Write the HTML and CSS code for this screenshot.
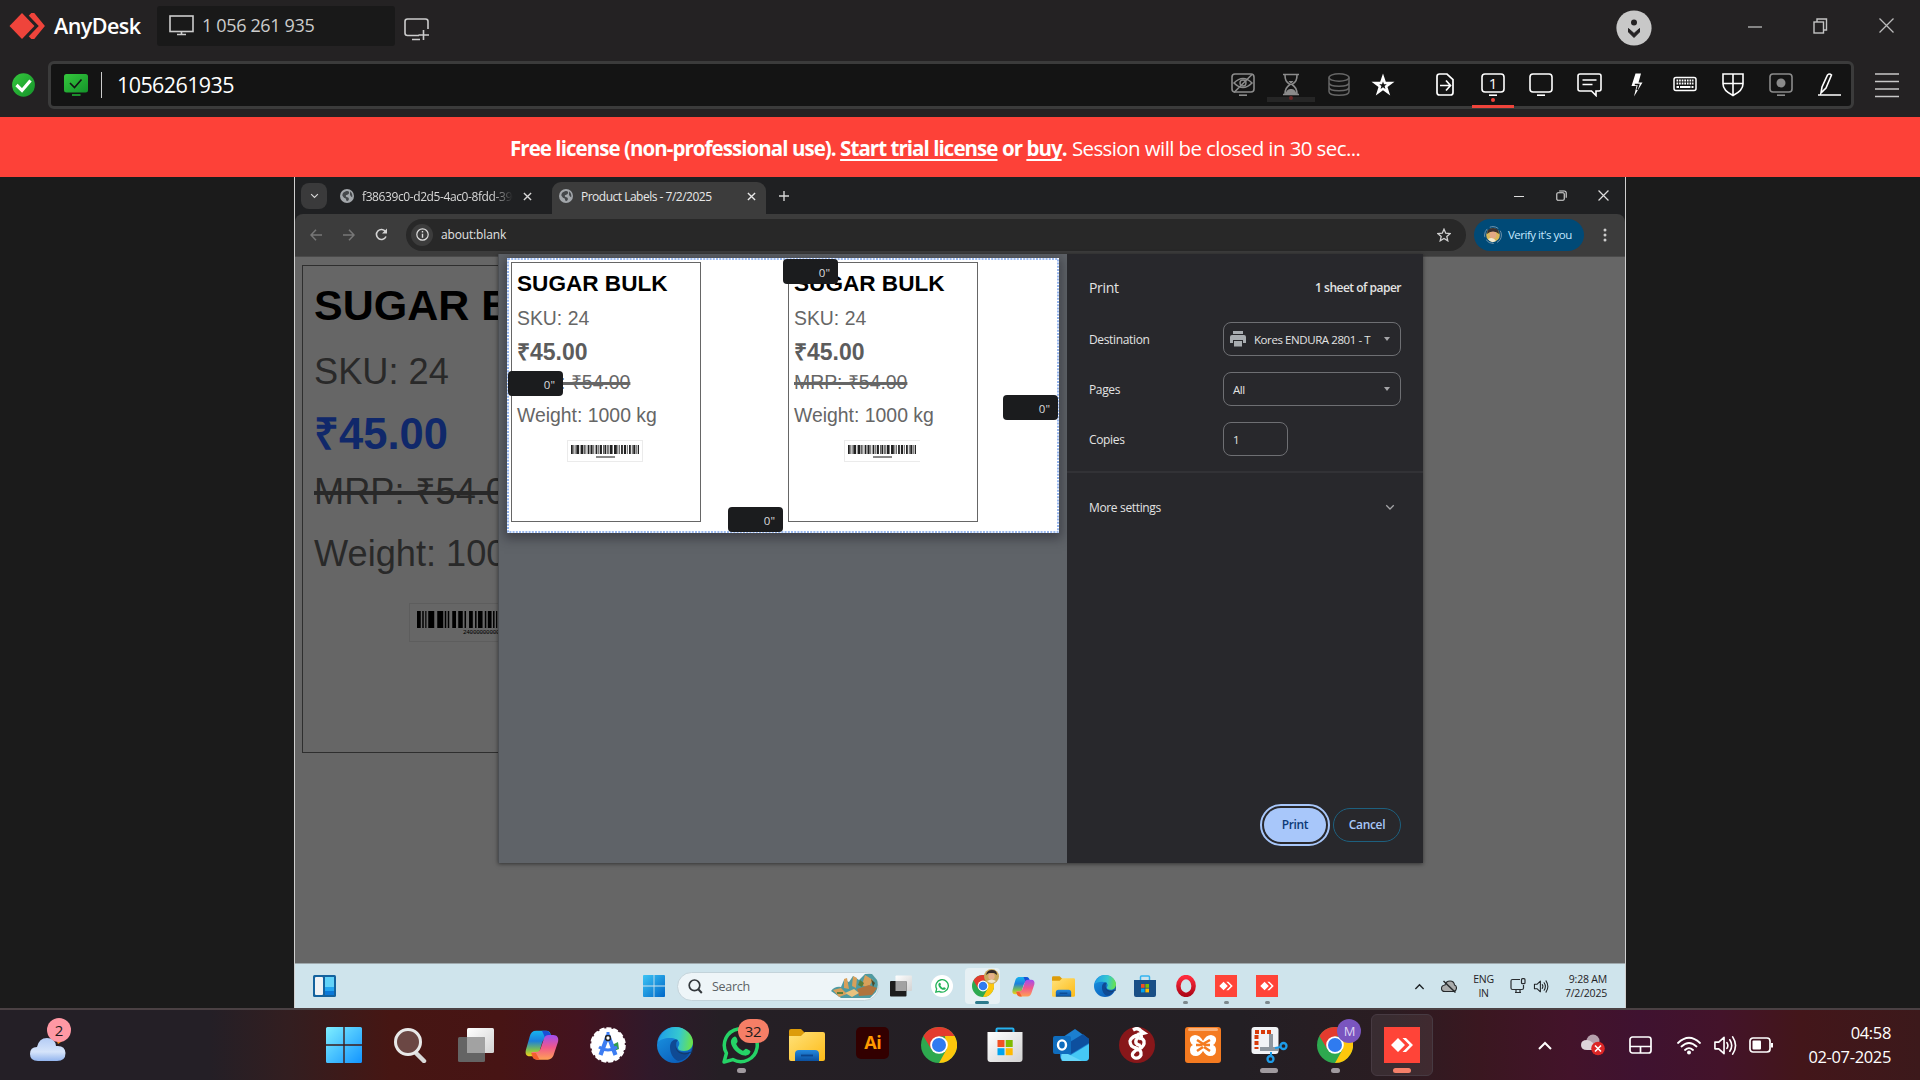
FILE: index.html
```html
<!DOCTYPE html>
<html lang="en">
<head>
<meta charset="utf-8">
<title>AnyDesk</title>
<link rel="stylesheet" href="styles.css">
</head>
<body>
<svg class="defs" width="0" height="0" aria-hidden="true">
  <defs>
    <linearGradient id="gWin" x1="0" y1="0" x2="1" y2="1"><stop offset="0" stop-color="#7fefff"/><stop offset="1" stop-color="#1294ff"/></linearGradient>
    <linearGradient id="gWinDark" x1="0" y1="0" x2="1" y2="1"><stop offset="0" stop-color="#3cc4f5"/><stop offset="1" stop-color="#0067c8"/></linearGradient>
    <linearGradient id="gGreen" x1="0" y1="0" x2="1" y2="1"><stop offset="0" stop-color="#35c83d"/><stop offset="1" stop-color="#14932a"/></linearGradient>
    <linearGradient id="gFolder" x1="0" y1="0" x2="1" y2="1"><stop offset="0" stop-color="#ffe27a"/><stop offset="1" stop-color="#fdbb18"/></linearGradient>
    <linearGradient id="gBlue" x1="0" y1="0" x2="0" y2="1"><stop offset="0" stop-color="#2388dd"/><stop offset="1" stop-color="#0b50a0"/></linearGradient>
    <linearGradient id="gEdgeA" x1="0" y1="0.3" x2="1" y2="0.4"><stop offset="0" stop-color="#1f9de8"/><stop offset=".6" stop-color="#35c8d0"/><stop offset="1" stop-color="#6be34a"/></linearGradient>
    <linearGradient id="gEdgeB" x1="0" y1="0" x2=".7" y2="1"><stop offset="0" stop-color="#1b9ae5"/><stop offset="1" stop-color="#0a5cba"/></linearGradient>
    <linearGradient id="gCopA" x1="0" y1="0" x2="0" y2="1"><stop offset="0" stop-color="#16b4ee"/><stop offset=".4" stop-color="#1c7fdc"/><stop offset=".75" stop-color="#7fc04e"/><stop offset="1" stop-color="#f7cf1a"/></linearGradient>
    <linearGradient id="gCopB" x1="0" y1="0" x2="0" y2="1"><stop offset="0" stop-color="#a04ef0"/><stop offset=".5" stop-color="#f0588c"/><stop offset="1" stop-color="#ffa155"/></linearGradient>
    <linearGradient id="gCloud" x1="0" y1="0" x2="0" y2="1"><stop offset="0" stop-color="#b4ccf5"/><stop offset=".6" stop-color="#d6e4fa"/><stop offset="1" stop-color="#93b5ee"/></linearGradient>
    <linearGradient id="gGrey" x1="0" y1="0" x2="1" y2="1"><stop offset="0" stop-color="#ffffff"/><stop offset="1" stop-color="#d2d2d2"/></linearGradient>
    <linearGradient id="gOpera" x1="0" y1="0" x2="0" y2="1"><stop offset="0" stop-color="#ff2a3c"/><stop offset="1" stop-color="#b00718"/></linearGradient>

    <symbol id="monitor" viewBox="0 0 24 24"><rect x="1" y="1" width="22" height="18" rx="3" fill="none" stroke="currentColor" stroke-width="1.6"/><path d="M8 22.2h8" stroke="currentColor" stroke-width="1.6"/></symbol>
    <symbol id="globe" viewBox="0 0 24 24"><circle cx="12" cy="12" r="12" fill="#a3a7ab"/><path d="M10 4c4-2 7 1 5 4s-5 1-5 4 4 1 5 4-1 4-3 5c-2-1-1-4-3-5s-4-3-5-5c0-3 2-6 6-7zM17 4c3 2 5 6 4 10-2-1-4-3-4-5s1-3 0-5z" fill="#45484b"/></symbol>
    <symbol id="cross" viewBox="0 0 10 10"><path d="M1 1l8 8M9 1L1 9" stroke="currentColor" stroke-width="1.5" fill="none"/></symbol>
    <symbol id="chev" viewBox="0 0 16 10"><path d="M2 1.5l6 6 6-6" stroke="currentColor" stroke-width="2" fill="none"/></symbol>
    <symbol id="restore" viewBox="0 0 14 14"><rect x="1" y="3.5" width="9.5" height="9.5" fill="none" stroke="currentColor" stroke-width="1.4"/><path d="M4 3.5V1h9v9.500h-2.500" fill="none" stroke="currentColor" stroke-width="1.4"/></symbol>
    <symbol id="winlogo" viewBox="0 0 36 36"><path d="M1.500 0H17.300V17.300H0V1.500Q0 0 1.500 0zM18.700 0H34.500Q36 0 36 1.500V17.300H18.700zM0 18.700H17.300V36H1.500Q0 36 0 34.500zM18.700 18.700H36V34.500Q36 36 34.500 36H18.700z"/></symbol>
    <symbol id="edge" viewBox="0 0 36 36"><circle cx="18" cy="18" r="18" fill="url(#gEdgeB)"/><path d="M1 15C4 5 11 0 18 0c11 0 18 8 18 15 0 6-4 9-9 9-4 0-6-1-6-3s2-3 1-6c-1-2-4-4-9-4-6 0-10 2-12 4z" fill="url(#gEdgeA)"/><path d="M13 20c0-6 5-9 8-7-3 3-3 8 0 11s8 3 12 1c-2 5-7 9-12 9-5-2-8-8-8-14z" fill="#0f4a94"/><path d="M21 13c-3 3-2 9 1 11 4 2 9 2 12 .5L36 18V26l-3.500 0C28 29 21 27 19 22c-1-3 0-7 2-9z" fill="#16294a" opacity=".55"/></symbol>
    <symbol id="chrome" viewBox="0 0 36 36"><circle cx="18" cy="18" r="18" fill="#2da94f"/><path d="M2.400 9A18 18 0 0 1 33.600 9L18 9.500 10.500 22.500z" fill="#e33b2e"/><path d="M33.600 9A18 18 0 0 1 18 36L25.500 22.500 24 9z" fill="#fdc70c"/><circle cx="18" cy="18" r="8.800" fill="#fff"/><circle cx="18" cy="18" r="7" fill="#2f7bf0"/></symbol>
    <symbol id="copilot" viewBox="0 0 36 36"><path d="M23 3c2 0 3 1 4 3l1 5h-5c-3 0-4 2-5 5l-3 10c-1 4-3 4-6 4H5c-4 0-5-3-4-7L5 9c1-4 3-6 7-6z" fill="url(#gCopA)"/><path d="M22 3c2 0 4 1 5 4l1.500 5H22l-4-9z" fill="#1a4fd6"/><path d="M13 33c-3 0-4-1-5-4l-1-4h5c3 0 4-2 5-5l3-9c1-3 3-4 5-4h5c4 0 6 3 5 7l-4 12c-1 4-3 7-7 7z" transform="translate(0 .5)" fill="url(#gCopB)"/><path d="M13 12h6l-5 14H8z" fill="#fff" opacity="0"/><path d="M12.500 33.500c-3 0-4-1-5-4l-1-3h5l4 7z" fill="#f4602e"/></symbol>
    <symbol id="folder" viewBox="0 0 36 36"><path d="M0 4q0-2 2-2h10l4 4v6H0z" fill="#dd9c0a"/><path d="M0 9h12l4-4h18q2 0 2 2v25q0 2-2 2H2q-2 0-2-2z" fill="url(#gFolder)"/><path d="M6 34V27q0-4 4-4h16q4 0 4 4v7z" fill="url(#gBlue)"/><path d="M12 28.500h12" stroke="#0b458c" stroke-width="1.800"/></symbol>
    <symbol id="waMark" viewBox="0 0 36 36"><path d="M2 34l2.300-8.500A16 16 0 1 1 10.500 31.700z" fill="none" stroke="currentColor" stroke-width="3.400" stroke-linejoin="round"/><path d="M12 9.500c2-1 3 3 3.200 4.300 0 1.500-1.800 2-1.200 3.200 1.400 2.800 3.400 4.700 6.200 6 1.200.4 2-2 3.300-1.800 1.500.5 4.500 1.800 4.200 3-.8 3-3.700 4-6 3.600C15 26.500 9 20 8.600 14.500c0-2 1.500-4.500 3.400-5z" fill="currentColor"/></symbol>
    <symbol id="admark" viewBox="0 0 36 36"><rect width="36" height="36" fill="#ff4438"/><path d="M14 11l7 7-7 7-7-7zM18.500 11h3.500l7 7-7 7h-3.500l7-7z" fill="#fff"/></symbol>
    <symbol id="taskview" viewBox="0 0 36 36"><rect x="9" y="1" width="27" height="25" rx="1.500" fill="url(#gGrey)"/><rect x="0" y="10" width="27" height="25" rx="1.500" fill="currentColor"/><path d="M9 10h16.500q1.500 0 1.500 1.500V26H9z" fill="#a2a2a2"/></symbol>
    <symbol id="speaker" viewBox="0 0 24 24"><path d="M1.500 8.500h4L11 3.500v17l-5.500-5h-4z" fill="none" stroke="currentColor" stroke-width="1.700" stroke-linejoin="round"/><path d="M14 9q2 3 0 6M17 6q4 6 0 12M20 3q6 9 0 18" fill="none" stroke="currentColor" stroke-width="1.700" stroke-linecap="round"/></symbol>
    <symbol id="barcode" viewBox="0 0 96 24" preserveAspectRatio="none"><path d="M0 12H96" stroke="currentColor" stroke-width="24" stroke-dasharray="2.500 1 1 1 .8 1.200 4 2 4 1 1 1 1 2 2.500 1.500 3 1.200 1 2 2.500 1.500 1 1 3 1.500 1 1"/></symbol>
  </defs>
</svg>

<header class="titlebar">
  <svg class="brand-logo" viewBox="0 0 36 26"><path d="M13 0l12.500 13L13 26 .500 13z" fill="#ef443b"/><path d="M22 0h3l11 13-11 13h-3l-3-3 8.500-10L19 3z" fill="#ef443b" transform="translate(1 0) scale(.97 1)"/><path d="M15.500 0L28 13 15.500 26" fill="none" stroke="#242223" stroke-width="2.500"/></svg>
  <span class="brand">AnyDesk</span>
  <div class="session-tab">
    <svg width="25" height="21" viewBox="0 0 25 21"><rect x="1" y="1" width="23" height="15.500" fill="none" stroke="#ccc" stroke-width="1.600"/><path d="M12.500 17v3M8 19.500h9" stroke="#ccc" stroke-width="1.600"/></svg>
    <span>1 056 261 935</span>
  </div>
  <svg class="newtab" width="26" height="23" viewBox="0 0 26 23"><path d="M15 17.500H3.500q-2.500 0-2.500-2.500V3.500Q1 1 3.500 1h18Q24 1 24 3.500V11M19.500 12v10M14.500 17h10.500M8 21.500h8" fill="none" stroke="#ccc" stroke-width="1.600"/></svg>
  <svg class="discover" width="36" height="36" viewBox="0 0 36 36"><circle cx="18" cy="18" r="17.600" fill="#c8c8c8"/><circle cx="18" cy="12.500" r="3" fill="#242223"/><path d="M12.500 18.500l5.500 5 5.500-5v3.500l-5.500 5.500-5.500-5.500z" fill="#242223" stroke="#242223"/></svg>
  <div class="win-controls">
    <svg width="14" height="16"><path d="M0 9h14" stroke="#bbb" stroke-width="1.300"/></svg>
    <svg width="15" height="16" viewBox="0 0 15 16"><rect x="1" y="4" width="9.500" height="11" fill="none" stroke="#c4c4c4" stroke-width="1.400"/><path d="M4 4V1h9.500v11H11" fill="none" stroke="#c4c4c4" stroke-width="1.400"/></svg>
    <svg width="15" height="15"><path d="M.500.500l14 14M14.500.500l-14 14" stroke="#bbb" stroke-width="1.300"/></svg>
  </div>
</header>

<div class="addressrow">
  <svg width="23" height="24" viewBox="0 0 23 24"><ellipse cx="11.500" cy="12" rx="11.400" ry="11.800" fill="url(#gGreen)"/><path d="M4.500 12l5.500 5.500L18.500 7.500" fill="none" stroke="#fff" stroke-width="3.200"/></svg>
  <div class="addressbox">
    <svg width="24" height="22" viewBox="0 0 24 22"><rect width="24" height="18.500" rx="2.500" fill="url(#gGreen)"/><path d="M8 21h8.500" stroke="#1fae33" stroke-width="1.600"/><path d="M6 9l4.500 4.500L17.500 5.500" fill="none" stroke="#141414" stroke-width="1.600"/></svg>
    <i class="sep"></i>
    <span class="address">1056261935</span>
    <div class="tools tools-status">
      <span class="tool dim"><svg width="24" height="24"><use href="#monitor"/><path d="M3 10q9-9 18 0-9 9-18 0zM21 1.500L3 19.500" fill="none" stroke="currentColor" stroke-width="1.600"/><circle cx="12" cy="10" r="3" fill="none" stroke="currentColor" stroke-width="1.400"/></svg></span>
      <span class="tool dim busy"><svg width="18" height="24" viewBox="0 0 18 24"><path d="M1 1.500h16M1 21.500h16M3 2c0 5 1 7 5 9.500-4 2.500-5 5-5 9.500M15 2c0 5-1 7-5 9.500 4 2.500 5 5 5 9.500" fill="none" stroke="currentColor" stroke-width="1.600"/><path d="M3.500 21c1-4 3-5 5.500-5s4.500 1 5.500 5zM6.500 8h5L9 11z" fill="currentColor"/></svg></span>
      <span class="tool dimmer"><svg width="22" height="24" viewBox="0 0 22 24"><ellipse cx="11" cy="4.500" rx="10" ry="3.700" fill="none" stroke="currentColor" stroke-width="1.500"/><path d="M1 4.500v14c0 5 20 5 20 0v-14M1 9.500c0 5 20 5 20 0M1 14c0 5 20 5 20 0" fill="none" stroke="currentColor" stroke-width="1.500"/></svg></span>
      <span class="tool star"><svg width="24" height="24" viewBox="0 0 24 24"><path d="M12 .500l2.800 8.200h8.700l-7 5.200 2.700 8.600-7.200-5.200-7.200 5.200 2.700-8.600-7-5.200h8.700z" fill="#fff"/><path d="M12 8.500l1 2.800h2.800l-2.200 1.800.8 2.900-2.400-1.700L9.600 16l.8-2.900-2.200-1.800H11z" fill="#141414"/></svg></span>
    </div>
    <div class="tools">
      <span class="tool"><svg width="18" height="24" viewBox="0 0 18 24"><path d="M1 3.500Q1 1 3.500 1H11l6 5.500v13q0 2.500-2.500 2.500h-11Q1 22 1 19.500zM4 12.500h10M10 7.500l4.500 5-4.500 5" fill="none" stroke="currentColor" stroke-width="1.700"/></svg></span>
      <span class="tool active"><svg width="24" height="24"><use href="#monitor"/></svg><b class="num">1</b></span>
      <span class="tool"><svg width="24" height="24"><use href="#monitor"/></svg></span>
      <span class="tool"><svg width="25" height="24" viewBox="0 0 25 24"><path d="M3 1h19q2 0 2 2v13q0 2-2 2h-3v4.500L14.500 18H3q-2 0-2-2V3q0-2 2-2zM5.500 7h14M5.500 11.500h10" fill="none" stroke="currentColor" stroke-width="1.600"/></svg></span>
      <span class="tool"><svg width="12" height="25" viewBox="0 0 12 25"><path d="M4.500.500h5.500L7.500 9.500h4L3 23.500 5.500 13h-5z" fill="currentColor"/><path d="M3.800 11.500h4L6 17" stroke="#141414" stroke-width="1.500" fill="none"/></svg></span>
      <span class="tool"><svg width="24" height="24" viewBox="0 0 24 24"><rect x="1" y="4.500" width="22" height="13" rx="2" fill="none" stroke="currentColor" stroke-width="1.500"/><path d="M3.500 7.500h17M3.500 10.500h17" stroke="currentColor" stroke-width="1.800" stroke-dasharray="1.700 .9"/><path d="M3.500 14h2.500M7 14h10.500M18.500 14h2" stroke="currentColor" stroke-width="2"/></svg></span>
      <span class="tool"><svg width="22" height="24" viewBox="0 0 22 24"><path d="M1 1h20v10c0 6-5 9-10 11.500C6 20 1 17 1 11zM11 1v21M1 10.500h20" fill="none" stroke="currentColor" stroke-width="1.600"/></svg></span>
      <span class="tool dim"><svg width="24" height="24"><use href="#monitor"/><circle cx="12" cy="10" r="4.500" fill="currentColor"/></svg></span>
      <span class="tool"><svg width="23" height="24" viewBox="0 0 23 24"><path d="M0 22h23M3 20l1-6L9.500 2q2-2 4 0L8 15z" fill="none" stroke="currentColor" stroke-width="1.600"/></svg></span>
    </div>
  </div>
  <svg class="hamburger" width="24" height="26"><path d="M0 2h24M0 9.500h24M0 17h24M0 24.500h24" stroke="#c8c8c8" stroke-width="1.500"/></svg>
</div>

<div class="banner"><span class="banner-bold">Free license (non-professional use). <u>Start trial license</u> or <u>buy</u>.</span> <span class="banner-rest">Session will be closed in 30 sec...</span></div>

<main class="stage">
  <section class="remote">
    <div class="tabstrip">
      <span class="tabsearch"><svg width="9" height="6"><use href="#chev"/></svg></span>
      <div class="tab"><svg width="14" height="14"><use href="#globe"/></svg><span class="tab-title fade">f38639c0-d2d5-4ac0-8fdd-3968</span><svg width="9" height="9"><use href="#cross"/></svg></div>
      <div class="tab tab-active"><svg width="14" height="14"><use href="#globe"/></svg><span class="tab-title">Product Labels - 7/2/2025</span><svg width="9" height="9"><use href="#cross"/></svg></div>
      <svg class="plus" width="10" height="10"><path d="M5 0v10M0 5h10" stroke="#d5d5d5" stroke-width="1.400"/></svg>
      <div class="caption">
        <span><svg width="10" height="10"><path d="M0 5.500h10" stroke="#ddd"/></svg></span>
        <span><svg width="11" height="11" viewBox="0 0 14 14"><rect x="1" y="3.500" width="9.500" height="9.500" rx="1.500" fill="none" stroke="#ddd" stroke-width="1.400"/><path d="M4 1.200h6.500q2.500 0 2.500 2.500V10" fill="none" stroke="#ddd" stroke-width="1.400"/></svg></span>
        <span><svg width="11" height="11" viewBox="0 0 10 10"><path d="M.500.500l9 9M9.500.500l-9 9" stroke="#ddd" stroke-width="1.100"/></svg></span>
      </div>
    </div>
    <div class="toolbar">
      <span class="nav off"><svg width="12" height="12"><path d="M12 6H1M6 .800L1 6l5 5.200" fill="none" stroke="currentColor" stroke-width="1.500"/></svg></span>
      <span class="nav off"><svg width="12" height="12"><path d="M0 6h11M6 .800L11 6l-5 5.200" fill="none" stroke="currentColor" stroke-width="1.500"/></svg></span>
      <span class="nav"><svg width="13" height="13" viewBox="0 0 13 13"><path d="M11 8.500A5 5 0 1 1 10.500 3.500" fill="none" stroke="currentColor" stroke-width="1.600"/><path d="M12 .500v5H7z" fill="currentColor"/></svg></span>
      <div class="omnibox">
        <span class="info"><svg width="13" height="13" viewBox="0 0 13 13"><circle cx="6.500" cy="6.500" r="5.700" fill="none" stroke="#ddd" stroke-width="1.200"/><path d="M6.500 5.700v4M6.500 3v1.500" stroke="#ddd" stroke-width="1.400"/></svg></span>
        <span class="url">about:blank</span>
        <svg class="fav" width="14" height="14" viewBox="0 0 24 24"><path d="M12 2l3 7 7.500.600-5.700 5 1.700 7.400L12 18l-6.500 4 1.700-7.400-5.700-5L9 9z" fill="none" stroke="#d0d0d0" stroke-width="2.200"/></svg>
      </div>
      <div class="verify"><svg width="18" height="18" viewBox="0 0 18 18"><circle cx="9" cy="9" r="8.400" fill="none" stroke="#6f93ad" stroke-dasharray="9 3"/><circle cx="9" cy="9" r="6.800" fill="#d8b85a"/><path d="M3 8q0-6 6-6t6 6l-3-2H6z" fill="#3a3030"/><circle cx="9" cy="9" r="3.400" fill="#e3a884"/><path d="M4 13q5-3 8 2-5 3-8-2z" fill="#f2ead0"/></svg><span>Verify it's you</span></div>
      <svg class="dots" width="4" height="14"><circle cx="2" cy="2" r="1.500" fill="#ccc"/><circle cx="2" cy="7" r="1.500" fill="#ccc"/><circle cx="2" cy="12" r="1.500" fill="#ccc"/></svg>
    </div>
    <div class="page">
      <article class="bigcard">
        <p class="b-name">SUGAR BULK</p>
        <p class="b-sku">SKU: 24</p>
        <p class="b-price">₹45.00</p>
        <p class="b-mrp">MRP: ₹54.00</p>
        <p class="b-weight">Weight: 1000 kg</p>
        <div class="b-code"><svg width="144" height="17"><use href="#barcode"/></svg><span>24000000000000</span></div>
      </article>
    </div>

    <div class="remote-taskbar">
      <svg class="rt-widgets" width="23" height="22" viewBox="0 0 23 22"><rect width="23" height="22" rx="1.500" fill="#14629e"/><rect x="2" y="2" width="8" height="18" rx="1" fill="#f0f2f5"/><rect x="12" y="2" width="9" height="10" fill="#62d2f8"/><rect x="12" y="12" width="9" height="4" fill="#22a4f0"/><rect x="12" y="16" width="9" height="4" fill="#0b78d8"/></svg>
      <svg class="rt-start" width="22" height="22" fill="url(#gWinDark)"><use href="#winlogo"/></svg>
      <div class="rt-search"><svg width="15" height="15" viewBox="0 0 15 15"><circle cx="6.500" cy="6.300" r="5.300" fill="none" stroke="#33383c" stroke-width="1.700"/><path d="M10.300 10.300l3.500 3.700" stroke="#33383c" stroke-width="2"/></svg><span>Search</span>
        <svg class="rt-food" width="47" height="24" viewBox="0 0 47 24"><path d="M0 17q4-5 10-4l3-7 5 2 4-6 6 4 6-6h7l5 6q2 6-1 12l-6 6H10z" fill="#4f9aa0"/><path d="M2 16l8-2 6 6-8 3zM13 5l3-1 2 11-5-1zM22 2l4 2-1 10-4-2zM34 1l8 5-5 8-6-3z" fill="#d8a05a"/><path d="M26 15l12-4 8 3-5 7-13 1z" fill="#b0733e"/><path d="M14 19l9-4 5 4-7 4z" fill="#eac27e"/><path d="M29 6l4 3-2 4-4-2zM6 18h6v2H6z" fill="#5a7d3a"/><path d="M40 5l4 4-2 4z" fill="#4d4b2a"/></svg></div>
      <div class="rt-apps">
        <span style="color:#1d1d1d"><svg width="22" height="22"><use href="#taskview"/></svg></span>
        <span class="wa"><i><svg width="14" height="14"><use href="#waMark"/></svg></i></span>
        <span class="sel"><i class="tile"><svg width="22" height="22"><use href="#chrome"/></svg><svg class="ava" width="15" height="15" viewBox="0 0 15 15"><circle cx="7.500" cy="7.500" r="7.500" fill="#c9a95c"/><path d="M2 6q1-5 6-5t5 5l-3-2H5z" fill="#33292a"/><circle cx="7.500" cy="7.500" r="3.200" fill="#e5b08c"/><path d="M3 12q5-3 9 0-4 4-9 0z" fill="#efe6cc"/></svg></i><b></b></span>
        <span><svg width="23" height="23"><use href="#copilot"/></svg></span>
        <span><svg width="23" height="23"><use href="#folder"/></svg></span>
        <span><svg width="22" height="22"><use href="#edge"/></svg></span>
        <span><svg width="22" height="23" viewBox="0 0 22 23"><path d="M6.500 5V2q0-1 1-1h7q1 0 1 1v3" fill="none" stroke="#35b4f0" stroke-width="1.500"/><path d="M0 5h22v15q0 2-2 2H2q-2 0-2-2z" fill="#1a4f86"/><path d="M7 9h3.600v3.800H7z" fill="#f25022"/><path d="M11.400 9H15v3.800h-3.600z" fill="#7fba00"/><path d="M7 13.600h3.600v3.800H7z" fill="#00a4ef"/><path d="M11.400 13.600H15v3.800h-3.600z" fill="#ffb900"/></svg></span>
        <span class="run"><svg width="22" height="22" viewBox="0 0 22 22"><ellipse cx="11" cy="11" rx="7.600" ry="8.900" fill="none" stroke="url(#gOpera)" stroke-width="4.500"/></svg><b></b></span>
        <span class="run"><svg width="22" height="22"><use href="#admark"/></svg><b></b></span>
        <span class="run"><svg width="22" height="22"><use href="#admark"/></svg><b></b></span>
      </div>
      <div class="rt-tray">
        <svg class="up" width="11" height="7"><use href="#chev"/></svg>
        <svg width="16" height="13" viewBox="0 0 16 13"><path d="M4 11.500q-3.500 0-3.500-3T4 5q1-4 5-4t4.500 4q2 .500 2 3t-2.500 3.500z" fill="#a9abab" stroke="#26292b" stroke-width="1.100"/><path d="M2.500 1l12 11.500" stroke="#26292b" stroke-width="1.500"/></svg>
        <span class="lang">ENG<br>IN</span>
        <svg width="16" height="16" viewBox="0 0 16 16"><path d="M10 1.500H2.500q-1.500 0-1.500 1.500v7q0 1.500 1.500 1.500h9.500q1.500 0 1.500-1.500V7M5 14.500h6M6 12v2M10 12v2" fill="none" stroke="#2a2d30" stroke-width="1.200"/><rect x="11.500" y=".700" width="3.500" height="5" rx="1" fill="none" stroke="#2a2d30" stroke-width="1.200"/></svg>
        <svg class="vol" width="16" height="15"><use href="#speaker"/></svg>
        <span class="clock">9:28 AM<br>7/2/2025</span>
      </div>
    </div>

    <div class="dialog">
      <div class="preview">
        <div class="paper">
          <article class="label">
            <p class="s-name">SUGAR BULK</p><p class="s-sku">SKU: 24</p><p class="s-price">₹45.00</p><p class="s-mrp">MRP: ₹54.00</p><p class="s-weight">Weight: 1000 kg</p>
            <div class="s-code"><svg width="68" height="9"><use href="#barcode"/></svg><i></i></div>
          </article>
          <article class="label">
            <p class="s-name">SUGAR BULK</p><p class="s-sku">SKU: 24</p><p class="s-price">₹45.00</p><p class="s-mrp">MRP: ₹54.00</p><p class="s-weight">Weight: 1000 kg</p>
            <div class="s-code open"><svg width="68" height="9"><use href="#barcode"/></svg><i></i></div>
          </article>
          <svg class="dash" width="552" height="275"><rect x="1" y="1" width="550" height="273" fill="none" stroke="#7ba4ec" stroke-width="1.600" stroke-dasharray="2 1.200"/></svg>
          <span class="margin m-top">0"</span><span class="margin m-left">0"</span><span class="margin m-right">0"</span><span class="margin m-bottom">0"</span>
        </div>
      </div>
      <div class="settings">
        <div class="set-head"><h1>Print</h1><strong>1 sheet of paper</strong></div>
        <div class="set-row"><span>Destination</span><div class="field"><svg width="16" height="16" viewBox="0 0 16 16"><path d="M3 0h10v3H3zM2 4h12q2 0 2 2v6h-3V9H3v3H0V6q0-2 2-2zM4 10h8v5.500H4z" fill="#a9adb1"/></svg><em>Kores ENDURA 2801 - T</em><i class="caret"></i></div></div>
        <div class="set-row"><span>Pages</span><div class="field"><em>All</em><i class="caret"></i></div></div>
        <div class="set-row"><span>Copies</span><div class="field short"><em>1</em></div></div>
        <div class="more"><span>More settings</span><svg width="10" height="7"><use href="#chev"/></svg></div>
        <div class="buttons"><span class="btn primary">Print</span><span class="btn">Cancel</span></div>
      </div>
    </div>
  </section>
</main>

<footer class="taskbar">
  <div class="weather"><svg width="38" height="30" viewBox="0 0 38 30"><path d="M24 0h8l3 8-6 4z" fill="#f58a1d"/><path d="M9 29Q1 29 1 22t7-7Q10 6 18 6t9 8q9-1 9.500 7 0 8-8.500 8z" fill="url(#gCloud)"/></svg><b>2</b></div>
  <div class="apps">
    <span><svg width="36" height="36" fill="url(#gWin)"><use href="#winlogo"/></svg></span>
    <span><svg width="34" height="36" viewBox="0 0 34 36"><path d="M21 24l10 10" stroke="#d9d9d9" stroke-width="4.500" stroke-linecap="round"/><circle cx="15" cy="15" r="12.500" fill="#6b4744" stroke="#e9e9e9" stroke-width="3"/></svg></span>
    <span style="color:#646464"><svg width="36" height="36"><use href="#taskview"/></svg></span>
    <span><svg width="34" height="36"><use href="#copilot"/></svg></span>
    <span><svg width="36" height="36" viewBox="0 0 36 36"><circle cx="18" cy="18" r="16.800" fill="#fff" stroke="#fff" stroke-width="2" stroke-dasharray="5 2"/><path d="M22 18l6-3 1 7-5 2z" fill="#2f9d4c"/><path d="M18 8L10.500 28M18 8l7.500 20" stroke="#3d7df2" stroke-width="4.200" fill="none"/><path d="M9 20q9 6 18 0" stroke="#3d7df2" stroke-width="3" fill="none"/><circle cx="18" cy="11" r="2.400" fill="#fff" stroke="#222" stroke-width="1.500"/><path d="M18 5v3" stroke="#3d7df2" stroke-width="3"/></svg></span>
    <span><svg width="36" height="36"><use href="#edge"/></svg></span>
    <span class="run green"><svg width="37" height="37"><use href="#waMark"/></svg><em class="count">32</em><b></b></span>
    <span><svg width="36" height="36"><use href="#folder"/></svg></span>
    <span><i class="ai">Ai</i></span>
    <span><svg width="36" height="36"><use href="#chrome"/></svg></span>
    <span><svg width="36" height="36" viewBox="0 0 36 36"><path d="M9.500 7V2.500q0-1 1-1h15q1 0 1 1V7" fill="none" stroke="#25b2ef" stroke-width="2"/><path d="M.500 5h35v27q0 3-3 3h-29q-3 0-3-3z" fill="url(#gGrey)"/><path d="M10.500 13h7v7h-7z" fill="#f25022"/><path d="M18.700 13h7v7h-7z" fill="#7fba00"/><path d="M10.500 21.200h7v7h-7z" fill="#00a4ef"/><path d="M18.700 21.200h7v7h-7z" fill="#ffb900"/></svg></span>
    <span><svg width="36" height="34" viewBox="0 0 36 34"><path d="M7 11L22 1l14 10v18q0 4-4 4H12q-5 0-5-5z" fill="#1b7fd0"/><path d="M12 17L30 6l6 5v4L18 26z" fill="#0d4f9e"/><path d="M8 33L36 16v13q0 4-4 4z" fill="#45c8f5"/><path d="M9 23l20 10H12q-4 0-4-4z" fill="#66d6fa"/><rect y="8" width="18" height="18" rx="2" fill="#0f6cbd"/><ellipse cx="9" cy="17" rx="4" ry="4.600" fill="none" stroke="#fff" stroke-width="2.400"/></svg></span>
    <span><svg width="36" height="36" viewBox="0 0 36 36"><circle cx="18" cy="18" r="18" fill="#88171a"/><path d="M14 3q5-3 8 1l3 2-4 1q3 3-1 5" fill="none" stroke="#fff" stroke-width="3.500"/><path d="M20 8q-7 1-9 6 0 6 6 7 6 2 5 7-2 4-6 3-4-2-2-5 2-3 6-4 6-3 5-8-2-4-6-3-3 2-2 5 2 3 5 2" fill="none" stroke="#fff" stroke-width="3.300"/></svg></span>
    <span><svg width="36" height="36" viewBox="0 0 36 36"><rect width="36" height="36" rx="3" fill="#f47a20"/><rect x="3" y="1" width="30" height="3" rx="1.500" fill="#fbb27a"/><path d="M10 8q5 0 8 6 3-6 8-6 6 1 5 6-1 3-3 4 3 1 3 5 0 6-6 6-4 0-7-5-3 5-7 5-6 0-6-6 0-4 3-5-2-1-3-4-1-5 5-6z" fill="#fff"/><path d="M12 13l8 5h5M25 13l-9 5h-5M12 24l6-4M25 24l-6-4" fill="none" stroke="#f47a20" stroke-width="2.500"/></svg></span>
    <span class="run wide"><svg width="37" height="36" viewBox="0 0 37 36"><rect x=".500" width="27" height="27" rx="3" fill="#f1f3f6"/><path d="M4 5h16M5.500 8v14" stroke="#d83b0a" stroke-width="4" stroke-dasharray="4 2"/><path d="M20 7v17M9 22h18" stroke="#8f979f" stroke-width="4" fill="none"/><circle cx="32.500" cy="19" r="3" fill="none" stroke="#1d9ce8" stroke-width="2.300"/><circle cx="19.500" cy="32" r="3" fill="none" stroke="#1d9ce8" stroke-width="2.300"/><path d="M24 21l6-1M20 25v4" stroke="#1d9ce8" stroke-width="2"/></svg><b></b></span>
    <span class="run"><svg width="36" height="36"><use href="#chrome"/></svg><em class="count profile">M</em><b></b></span>
    <span class="run current"><svg width="36" height="36"><use href="#admark"/></svg><b></b></span>
  </div>
  <div class="tray">
    <svg class="up" width="16" height="11"><use href="#chev"/></svg>
    <svg class="t-cloud" width="25" height="22" viewBox="0 0 25 22"><circle cx="12" cy="7" r="6.500" fill="#b5a0ac"/><path d="M6 16q-6 0-6-5t6-5q3 0 6 3l5 7z" fill="#ddd5da"/><circle cx="17" cy="14.500" r="6.800" fill="#dc2626"/><path d="M14 11.500l6 6M20 11.500l-6 6" stroke="#fff" stroke-width="1.600"/></svg>
    <svg class="t-pad" width="23" height="18" viewBox="0 0 23 18"><rect x="1" y="1" width="21" height="16" rx="2.500" fill="none" stroke="#fff" stroke-width="1.700"/><path d="M1 10.500h21M11.500 10.500V17" stroke="#fff" stroke-width="1.700"/></svg>
    <svg class="t-wifi" width="24" height="19" viewBox="0 0 24 19"><path d="M1 7q11-10.500 22 0M4.500 10.500q7.500-7 15 0M8 14q4-3.800 8 0" fill="none" stroke="#fff" stroke-width="1.800" stroke-linecap="round"/><circle cx="12" cy="16.500" r="2" fill="#fff"/></svg>
    <svg class="t-vol" width="24" height="23"><use href="#speaker"/></svg>
    <svg class="t-bat" width="24" height="16" viewBox="0 0 24 16"><rect x="1" y="1" width="20" height="14" rx="3" fill="none" stroke="#fff" stroke-width="1.700"/><rect x="3.500" y="3.500" width="8.500" height="9" rx="1" fill="#fff"/><path d="M23 6v4.500" stroke="#fff" stroke-width="2"/></svg>
    <span class="clock">04:58<br>02-07-2025</span>
  </div>
</footer>
</body>
</html>
```
FILE: styles.css
```css
* { box-sizing: border-box; }
html, body { margin: 0; height: 1080px; overflow: hidden; }
body {
  width: 1920px;
  display: flex;
  flex-direction: column;
  background: #1b1b1b;
  color: #fff;
  font-family: "Open Sans", "Noto Sans", sans-serif;
}
svg { display: block; flex: none; }
p, h1 { margin: 0; }
i, em { font-style: normal; }
.defs { position: absolute; }

/* AnyDesk title bar */
.titlebar {
  height: 53px;
  flex: none;
  display: flex;
  align-items: flex-start;
  background: #242223;
}
.brand-logo { width: 36px; height: 26px; margin: 13px 0 0 9px; }
.brand {
  width: 103px;
  margin: 0 0 0 9px;
  font-size: 21.5px;
  font-weight: 600;
  line-height: 51px;
  letter-spacing: -0.55px;
  white-space: nowrap;
}
.session-tab {
  width: 238px;
  height: 40px;
  margin-top: 6px;
  padding: 0 0 2px 12px;
  display: flex;
  align-items: center;
  gap: 8px;
  background: #191919;
  border-radius: 3px;
  color: #ccc;
  font-size: 18px;
  letter-spacing: -0.35px;
}
.newtab { margin: 18px 0 0 9px; }
.discover { margin: 10px 96px 0 auto; }
.win-controls { width: 146px; margin: 18px 26px 0 0; display: flex; justify-content: space-between; }

/* Address row */
.addressrow {
  height: 64px;
  flex: none;
  padding: 8px 21px 8px 12px;
  display: flex;
  align-items: center;
  background: #242223;
}
.addressbox {
  width: 1806px;
  height: 48px;
  margin: 0 21px 0 13px;
  padding-left: 13px;
  display: flex;
  align-items: center;
  background: #141414;
  border: 3px solid #3b3b3b;
  border-radius: 6px;
}
.sep { width: 1px; height: 26px; margin: 0 15px 0 13px; background: #ccc; }
.address { font-size: 21.5px; letter-spacing: -0.6px; line-height: 40px; }
.tools { display: flex; height: 42px; margin-right: 0; }
.tools-status { margin: 0 18px 0 auto; }
.tools:last-child { margin-right: -2px; }
.tool {
  position: relative;
  width: 48px;
  height: 42px;
  display: flex;
  justify-content: center;
  align-items: center;
}
.tool.star { width: 40px; }
.dim { color: #8b8b8b; }
.dimmer { color: #666; }
.busy::before {
  content: "";
  position: absolute;
  left: 0;
  bottom: 4px;
  width: 48px;
  height: 5px;
  background: #262626;
}
.busy::after, .active::before {
  content: "";
  position: absolute;
  left: 22px;
  bottom: 6px;
  width: 4px;
  height: 4px;
  border-radius: 2px;
  background: #6b2727;
}
.active::before { bottom: 4px; background: #ef443b; }
.active::after {
  content: "";
  position: absolute;
  left: 3px;
  bottom: -2px;
  width: 42px;
  height: 3px;
  background: #ef443b;
}
.num { position: absolute; left: 0; width: 48px; top: 9px; text-align: center; font-size: 15px; font-weight: 400; line-height: 20px; }

/* Licence banner */
.banner {
  height: 60px;
  flex: none;
  padding-left: 510px;
  background: #fd4138;
  font-size: 20.5px;
  line-height: 62px;
  white-space: pre;
}
.banner-bold { font-weight: 700; letter-spacing: -0.95px; }
.banner-rest { letter-spacing: -0.6px; }
.banner u { text-underline-offset: 3px; text-decoration-thickness: 1.5px; text-decoration-skip-ink: none; }

/* Remote desktop */
.stage { height: 831px; flex: none; display: flex; justify-content: center; }
.remote {
  position: relative;
  width: 1332px;
  display: flex;
  flex-direction: column;
  border-left: 1px solid #cfcfcf;
  border-right: 1px solid #cfcfcf;
  background: #1f2022;
  font-size: 12px;
}
.tabstrip { height: 37px; flex: none; display: flex; align-items: center; padding-left: 6px; color: #d8d8d8; }
.tabsearch { width: 26px; height: 26px; display: grid; place-items: center; background: #3a3a3b; border-radius: 8px; }
.tab { width: 225px; height: 32px; margin-top: 5px; padding: 0 20px 4px 13px; display: flex; align-items: center; }
.tab svg:first-child { margin-right: 8px; }
.tab-title { flex: 1; overflow: hidden; white-space: nowrap; font-size: 12px; letter-spacing: -0.5px; }
.fade { margin-right: 10px; letter-spacing: -0.4px; -webkit-mask-image: linear-gradient(90deg, #000 86%, transparent); mask-image: linear-gradient(90deg, #000 86%, transparent); }
.tab-active { width: 214px; padding: 0 10px 4px 7px; background: #3c3c3c; border-radius: 9px 9px 0 0; color: #e8e8e8; }
.plus { margin-left: 13px; }
.caption { margin-left: auto; display: flex; }
.caption span { width: 42.5px; display: grid; place-items: center; }
.toolbar {
  height: 43px;
  flex: none;
  padding: 0 0 1px 4px;
  display: flex;
  align-items: center;
  background: #3c3c3c;
  border-bottom: 1px solid #4a4a4a;
  border-radius: 8px 8px 0 0;
}
.nav { width: 33px; display: grid; place-items: center; color: #d5d5d5; }
.nav.off { color: #777; }
.omnibox { width: 1060px; height: 32px; margin-left: 8px; padding: 0 15px 0 5px; display: flex; align-items: center; background: #282828; border-radius: 16px; }
.info { width: 22px; height: 22px; margin-right: 8px; display: grid; place-items: center; background: #3c3c3c; border-radius: 50%; }
.url { font-size: 12px; letter-spacing: -0.15px; color: #e3e3e3; }
.fav { margin-left: auto; }
.verify { width: 110px; height: 32px; margin-left: 8px; padding-left: 10px; display: flex; align-items: center; gap: 6px; background: #004a77; border-radius: 16px; color: #c2e7ff; font-size: 11.500px; letter-spacing: -0.5px; white-space: nowrap; }
.dots { margin-left: 19px; }

.page { flex: 1; overflow: hidden; background: #666; padding: 8px 0 0 7px; font-family: "Liberation Sans", Arial, sans-serif; }
.bigcard { width: 460px; height: 488px; padding-left: 11px; border: 1px solid #2e2e2e; color: #292929; font-size: 36.200px; white-space: nowrap; }
.b-name { height: 78px; line-height: 78px; font-size: 43px; font-weight: 700; color: #000; }
.b-sku { height: 55px; line-height: 55px; }
.b-price { height: 70px; line-height: 70px; font-size: 43.500px; font-weight: 700; color: #10286a; }
.b-mrp { height: 46px; line-height: 46px; text-decoration: line-through; text-decoration-thickness: 4px; }
.b-weight { height: 77px; line-height: 77px; }
.b-code { width: 160px; height: 39px; margin: 11px 0 0 95px; padding: 7px 0 0 7px; border: 1px solid #5d5d5d; color: #000; }
.b-code span { display: block; margin-left: 46px; font: 6px/10px "Liberation Mono", monospace; letter-spacing: -0.3px; }

/* Remote taskbar */
.remote-taskbar {
  height: 45px;
  flex: none;
  padding: 0 18px 0 18px;
  display: flex;
  align-items: center;
  background: #cfe4ec;
  border-top: 1px solid #9fa9ad;
  color: #1f2326;
}
.rt-start { margin-left: 307px; }
.rt-search { width: 202px; height: 29px; margin-left: 12px; padding-left: 10px; display: flex; align-items: center; gap: 9px; background: #eef5f8; border: 1px solid #c3d3da; border-radius: 15px; color: #5b6165; font-size: 12.500px; letter-spacing: -0.3px; }
.rt-food { margin-left: auto; }
.rt-apps { display: flex; margin-left: 2px; }
.rt-apps span { position: relative; width: 40.650px; height: 44px; display: grid; place-items: center; }
.rt-apps .wa i { width: 22px; height: 22px; display: grid; place-items: center; border-radius: 50%; background: #fff; color: #25b35a; }
.tile { width: 35px; height: 36px; display: grid; place-items: center; border-radius: 4px; background: #e6f0f4; }
.ava { position: absolute; right: 4px; top: 5px; }
.rt-apps b { position: absolute; left: 18px; bottom: 4px; width: 5px; height: 3px; border-radius: 2px; background: #7d888d; }
.rt-apps .sel b { left: 13px; width: 14px; background: #2d7a8c; }
.rt-tray { margin-left: auto; display: flex; align-items: center; font-size: 10.500px; line-height: 14.500px; letter-spacing: -0.2px; text-align: right; }
.rt-tray .up, .tray .up { transform: rotate(180deg); }
.rt-tray svg + svg { margin-left: 16px; }
.lang { margin: 0 16px 0 16px; text-align: center; }
.rt-tray .vol { margin-left: 7px; }
.rt-tray .clock { width: 58px; white-space: nowrap; }

/* Print dialog floating over the page */
.dialog { position: absolute; left: 203px; top: 77px; width: 925px; height: 609px; display: flex; background: #28282c; box-shadow: 0 1px 4px rgba(0,0,0,.5); }
.preview { width: 569px; padding: 4px 0 0 8px; background: #5f6368; border-left: 1px solid #4b4e52; overflow: hidden; }
.paper { position: relative; width: 552px; height: 275px; padding: 4px 0 0 4px; display: flex; gap: 87px; background: #fff; box-shadow: 0 3px 10px 3px rgba(40,40,50,.55); font-family: "Liberation Sans", Arial, sans-serif; }
.dash { position: absolute; left: 0; top: 0; }
.label { width: 190px; height: 260px; padding-left: 5px; border: 1.500px solid #666; color: #666; font-size: 19.400px; white-space: nowrap; }
.s-name { height: 40px; line-height: 41px; font-size: 22.600px; font-weight: 700; color: #000; }
.s-sku { height: 31px; line-height: 31px; }
.s-price { height: 35px; line-height: 36px; font-size: 23px; font-weight: 700; color: #5c5c5c; }
.s-mrp { height: 27px; line-height: 27px; text-decoration: line-through; text-decoration-thickness: 3px; }
.s-weight { height: 39px; line-height: 39px; }
.s-code { width: 76px; height: 22px; margin: 5px 0 0 50px; padding: 4px 0 0 3px; border: 1px solid #ebebeb; color: #222; }
.s-code.open { border-right: 0; }
.s-code i { display: block; width: 19px; height: 2px; margin: 2px 0 0 25px; background: #888; }
.margin { position: absolute; width: 55px; height: 25px; padding-right: 8px; border-radius: 4px; background: #1b1c1e; color: #ddd; font: 11.500px/27px "Open Sans", sans-serif; text-align: right; }
.m-top { left: 276px; top: 1px; }
.m-left { left: 1px; top: 113px; }
.m-right { left: 496px; top: 137px; }
.m-bottom { left: 221px; top: 249px; }

.settings { flex: 1; display: flex; flex-direction: column; padding: 17px 22px 21px 22px; color: #e3e3e3; font-size: 12px; letter-spacing: -0.35px; }
.set-head { height: 43px; display: flex; align-items: center; justify-content: space-between; padding-bottom: 10px; }
.set-head h1 { font-size: 14px; font-weight: 400; letter-spacing: -0.3px; }
.set-head strong { font-size: 12px; font-weight: 600; letter-spacing: -0.5px; }
.set-row { height: 50px; display: flex; align-items: center; justify-content: space-between; }
.field { width: 178px; height: 34px; padding: 0 10px 0 9px; display: flex; align-items: center; border: 1px solid #6e6f73; border-radius: 8px; font-size: 11.500px; letter-spacing: -0.42px; }
.field svg { margin: 0 8px 0 -3px; }
.field.short { width: 65px; margin-right: 113px; }
.caret { margin-left: auto; border: 3.500px solid transparent; border-top: 4px solid #a5a5a8; border-bottom: 0; }
.more { height: 70px; margin: 7px -22px 0; padding: 0 28px 0 22px; display: flex; align-items: center; justify-content: space-between; border-top: 2px solid #323236; color: #e3e3e3; }
.more svg { color: #a5a5a8; }
.buttons { margin-top: auto; display: flex; justify-content: flex-end; gap: 6px; }
.btn { width: 68px; height: 34px; border: 1px solid #1d607f; border-radius: 17px; color: #a8c7fa; font-weight: 600; line-height: 32px; text-align: center; }
.primary { width: 62px; border: 0; background: #a8c7fa; color: #0c3a76; line-height: 34px; outline: 2px solid #a8c7fa; outline-offset: 2px; margin-right: 1px; }

/* Host taskbar */
.taskbar {
  height: 72px;
  flex: none;
  display: flex;
  align-items: center;
  border-top: 2px solid #4b4144;
  background: linear-gradient(90deg, #241f26 0, #241f26 210px, #331e20 290px, #461613 390px, #471414 500px, #43131f 580px, #30192a 650px, #251f25 720px, #231f24 1240px, #2a1d22 1380px, #3a1720 1480px, #43132a 1570px, #3f1230 1640px, #43132a 1720px, #43161a 1800px, #3c191b 1920px);
}
.weather { position: relative; width: 38px; margin: 4px 0 0 29px; align-self: center; }
.weather svg { margin-top: 0; }
.weather b { position: absolute; left: 18px; top: -14px; width: 24px; height: 24px; border-radius: 50%; background: #ff98a4; color: #1b1b1b; font-size: 15px; font-weight: 400; line-height: 24px; text-align: center; }
.apps { display: flex; margin-left: 244px; }
.apps > span { position: relative; width: 66.100px; height: 70px; display: grid; place-items: center; }
.green { color: #25d366; }
.apps b { position: absolute; left: 29px; bottom: 7px; width: 9px; height: 5px; border-radius: 3px; background: #a09a9f; }
.wide b, .current b { left: 24px; width: 18px; }
.current::before { content: ""; position: absolute; left: 2px; top: 4px; width: 60px; height: 60px; border: 1px solid #473a42; border-radius: 6px; background: rgba(255,255,255,.07); }
.current svg { position: relative; }
.current b { background: #f5806a; }
.count { position: absolute; left: 30px; top: 9px; width: 31px; height: 24px; border-radius: 12px; background: #f57e66; color: #1b1b1b; font-size: 15px; line-height: 24px; text-align: center; letter-spacing: -0.3px; }
.count.profile { left: 35px; width: 24px; background: #7a55bf; color: #ded3f3; font-size: 13px; }
.ai { width: 33px; height: 32px; margin-bottom: 4px; border-radius: 5px; background: #320000; color: #ff9a00; font: 700 18px/31px "Open Sans", sans-serif; letter-spacing: -0.5px; text-align: center; }
.tray { margin-left: auto; padding-right: 29px; display: flex; align-items: center; }
.t-cloud { margin-left: 28px; }
.t-pad { margin-left: 23px; }
.t-wifi { margin-left: 25px; }
.t-vol { margin-left: 12px; }
.t-bat { margin-left: 12px; }
.tray .clock { width: 118px; font-size: 16.500px; line-height: 24px; letter-spacing: -0.35px; text-align: right; white-space: nowrap; }
```
